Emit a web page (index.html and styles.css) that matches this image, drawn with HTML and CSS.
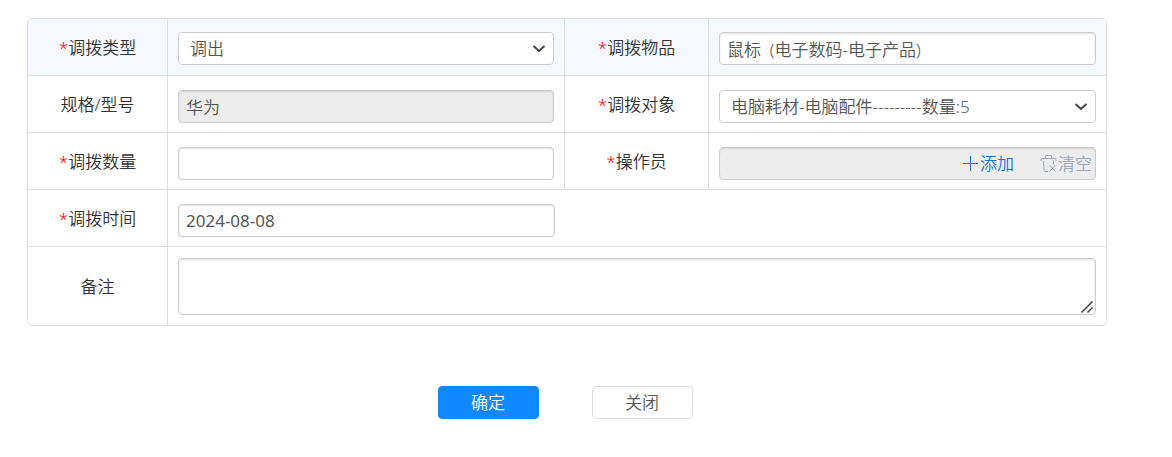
FILE: index.html
```html
<!DOCTYPE html>
<html lang="zh-CN">
<head>
  <meta charset="UTF-8">
  <meta name="viewport" content="width=device-width, initial-scale=1.0">
  <title>物品调拨</title>
  <link rel="stylesheet" href="styles.css">
</head>
<body>
  <form id="transferForm">
    <table class="form-table">
      <colgroup>
        <col class="col-label">
        <col>
        <col class="col-label-wide">
        <col>
      </colgroup>
      <tr class="highlight">
        <th><label for="type"><span class="required">*</span>调拨类型</label></th>
        <td>
          <select id="type" name="type">
            <option>调出</option>
            <option>调入</option>
          </select>
        </td>
        <th><label for="goods"><span class="required">*</span>调拨物品</label></th>
        <td><input type="text" id="goods" name="goods" value="鼠标  (电子数码-电子产品)"></td>
      </tr>
      <tr>
        <th><label for="model">规格/型号</label></th>
        <td><input type="text" id="model" name="model" value="华为" readonly></td>
        <th><label for="target"><span class="required">*</span>调拨对象</label></th>
        <td>
          <select id="target" name="target">
            <option>电脑耗材-电脑配件---------数量:5</option>
          </select>
        </td>
      </tr>
      <tr>
        <th><label for="amount"><span class="required">*</span>调拨数量</label></th>
        <td><input type="text" id="amount" name="amount"></td>
        <th><label for="operator"><span class="required">*</span>操作员</label></th>
        <td>
          <div class="picker">
            <input type="text" id="operator" name="operator" readonly>
            <a href="#" class="add">
              <svg width="17" height="17" viewBox="0 0 17 17"><path d="M8.5 1v15M1 8.5h15"/></svg>添加
            </a>
            <a href="#" class="clear">
              <svg width="17" height="19" viewBox="0 0 17 19"><path d="M1 7V5.500q0-1 1-1h13q1 0 1 1V7M5 4.500l.8-3h5.400l.8 3M3.500 7l.5 9.500q.1 1 1 1h3M13.500 6.500v4M9.500 11l6 6.500M15.500 11l-6 6.500"/></svg>清空
            </a>
          </div>
        </td>
      </tr>
      <tr>
        <th><label for="date"><span class="required">*</span>调拨时间</label></th>
        <td class="no-line"><input type="text" id="date" name="date" class="date" value="2024-08-08"></td>
        <td class="no-line"></td>
        <td></td>
      </tr>
      <tr class="remark">
        <th><label for="remark">备注</label></th>
        <td colspan="3"><textarea id="remark" name="remark"></textarea></td>
      </tr>
    </table>

    <div class="actions">
      <button type="submit" class="primary">确定</button>
      <button type="button">关闭</button>
    </div>
  </form>
</body>
</html>
```

FILE: styles.css
```css
* {
  box-sizing: border-box;
}

body {
  margin: 0;
  padding: 18px 65px 38px 27px;
  background-color: #fff;
  color: #333;
}

body, input, select, textarea, button {
  font-family: "Noto Sans", "Noto Sans CJK SC", sans-serif;
  font-size: 17px;
  font-weight: 350;
  line-height: 24px;
}

.form-table {
  width: 100%;
  table-layout: fixed;
  border: 1px solid #ddd;
  border-radius: 5px;
  border-spacing: 0;
  overflow: hidden;
}

.col-label {
  width: 140px;
}

.col-label-wide {
  width: 144px;
}

th, td {
  border-right: 1px solid #ddd;
  border-bottom: 1px solid #ddd;
  vertical-align: middle;
}

th {
  padding: 2px 0 0;
  font-weight: 350;
}

td {
  padding: 14px 10px 9px;
}

th:last-child, td:last-child, .no-line {
  border-right: none;
}

.highlight {
  background-color: #f5f9ff;
}

.highlight td {
  padding: 13px 10px 10px;
}

.remark th, .remark td {
  border-bottom: none;
}

.remark td {
  padding: 11px 10px 10px;
}

.required {
  color: #f00;
}

input, select, textarea, .picker {
  display: block;
  width: 100%;
  height: 33px;
  border: 1px solid #ccc;
  border-radius: 4px;
  background-color: #fff;
  color: #555;
}

input, textarea {
  padding: 0 7px;
  box-shadow: inset 0 1px 2px rgba(0, 0, 0, 0.12);
}

select {
  appearance: none;
  padding: 0 28px 0 11px;
  background: #fff url("data:image/svg+xml,%3Csvg xmlns='http://www.w3.org/2000/svg' width='14' height='8'%3E%3Cpath d='M1.500 1l5.500 5 5.500-5' fill='none' stroke='%23444' stroke-width='2'/%3E%3C/svg%3E") no-repeat right 7px center;
}

textarea {
  height: 57px;
  resize: vertical;
}

textarea::-webkit-resizer {
  background: url("data:image/svg+xml,%3Csvg xmlns='http://www.w3.org/2000/svg' width='15' height='15'%3E%3Cpath d='M1.500 13.500l11-11M7.500 13.500l5-5' fill='none' stroke='%23444' stroke-width='1.500'/%3E%3C/svg%3E") no-repeat right bottom;
}

input[readonly] {
  background-color: #ededed;
}

.date {
  font-weight: 400;
}

/* Operator box with add / clear links */
.picker {
  display: flex;
  align-items: center;
  padding-right: 3px;
  background-color: #ededed;
  box-shadow: inset 0 1px 2px rgba(0, 0, 0, 0.12);
}

.picker input {
  flex: 1;
  min-width: 0;
  height: 24px;
  border: none;
  box-shadow: none;
}

.picker a {
  display: flex;
  align-items: center;
  gap: 1px;
  text-decoration: none;
}

.picker svg {
  fill: none;
  stroke: currentColor;
}

.add {
  margin-right: 26px;
  color: #1c74d9;
}

.clear {
  color: #9aa7b8;
}

.actions {
  display: flex;
  justify-content: center;
  gap: 53px;
  margin-top: 60px;
  padding-right: 4px;
}

button {
  width: 101px;
  height: 33px;
  padding: 0;
  border: 1px solid #ddd;
  border-radius: 4px;
  background-color: #fff;
  color: #555;
  cursor: pointer;
}

.primary {
  border-color: #1088ff;
  background-color: #1088ff;
  color: #fff;
}
```
